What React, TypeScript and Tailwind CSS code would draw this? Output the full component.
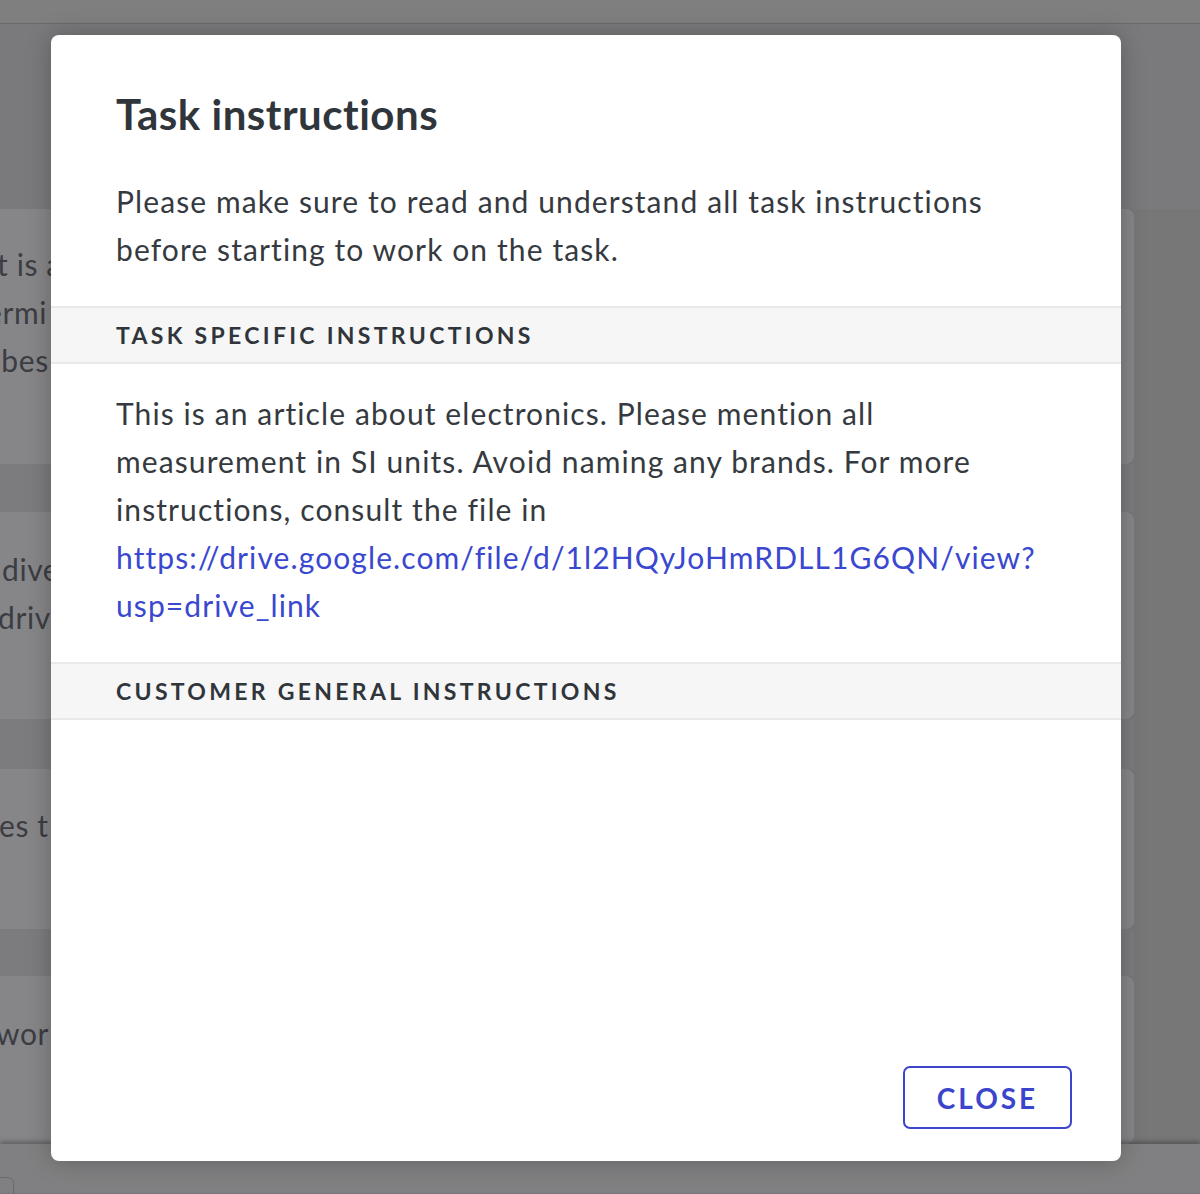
import React from "react";

const font = { fontFamily: "Lato, 'Noto Sans', sans-serif" };

function BehindCard({ lines, h, pt }: { lines: { t: string; ml: string }[]; h: string; pt: string }) {
  return (
    <div className={`w-[1134px] ${h} ${pt} bg-[#868689] rounded-r-[8px] text-[30px] leading-[48px] tracking-[0.6px] text-[#3b3d42]`}>
      {lines.map((l, i) => (
        <div key={i} className={`${l.ml} whitespace-nowrap`}>
          {l.t}
        </div>
      ))}
    </div>
  );
}

export default function App() {
  return (
    <div className="relative w-[1200px] h-[1194px] overflow-hidden bg-[#777777]" style={font}>
      {/* Page behind overlay */}
      <div className="flex flex-col">
        <div className="h-[24px] bg-[#7f7f7f] border-b border-[#6a6a6a]" />
        <div className="h-[185px] bg-[#7a7a7c]" />
        <BehindCard
          h="h-[255px]"
          pt="pt-[31px]"
          lines={[
            { t: "t is a", ml: "-ml-[3px]" },
            { t: "ermi", ml: "-ml-[14px]" },
            { t: "ubes", ml: "-ml-[16px]" },
          ]}
        />
        <div className="h-[48px] w-[1134px] bg-[#7c7c7e]" />
        <BehindCard
          h="h-[207px]"
          pt="pt-[33px]"
          lines={[
            { t: "dive", ml: "ml-[2px]" },
            { t: "driv", ml: "-ml-[2px]" },
          ]}
        />
        <div className="h-[50px] w-[1134px] bg-[#7c7c7e]" />
        <BehindCard h="h-[160px]" pt="pt-[32px]" lines={[{ t: "es t", ml: "-ml-[1px]" }]} />
        <div className="h-[47px] w-[1134px] bg-[#7c7c7e]" />
        <BehindCard h="h-[168px]" pt="pt-[33px]" lines={[{ t: "wor", ml: "-ml-[4px]" }]} />
        <div className="h-[49px] bg-[#808082] shadow-[0_-3px_4px_rgba(0,0,0,0.25)] pt-[33px]">
          <div className="w-[16px] h-[20px] border border-[#6a6a6a] rounded-tr-[6px] -ml-[2px]" />
        </div>
      </div>

      {/* Modal */}
      <div className="absolute left-[51px] top-[35px] w-[1070px] h-[1126px] bg-white rounded-[8px] shadow-[0_0_24px_rgba(0,0,0,0.25)] flex flex-col text-[#353a40]">
        <div className="pl-[65px] pr-[40px] pt-[55px]">
          <h1 className="text-[42px] leading-[48px] font-bold tracking-[0.5px] text-[#30353b]">Task instructions</h1>
          <p className="mt-[39px] text-[30px] leading-[48px] tracking-[1.1px] pb-[33px]">
            Please make sure to read and understand all task instructions
            <br />
            before starting to work on the task.
          </p>
        </div>
        <div className="h-[58px] bg-[#f6f6f6] border-y-2 border-[#e9e9e9] flex items-center px-[65px]">
          <span className="text-[23px] font-bold tracking-[3.3px] text-[#30353b]">TASK SPECIFIC INSTRUCTIONS</span>
        </div>
        <div className="pl-[65px] pr-[40px] pt-[25px] pb-[33px] text-[30px] leading-[48px] tracking-[1.1px]">
          This is an article about electronics. Please mention all
          <br />
          measurement in SI units. Avoid naming any brands. For more
          <br />
          instructions, consult the file in
          <br />
          <a className="text-[#3a47cf]" href="#">
            https://drive.google.com/file/d/1l2HQyJoHmRDLL1G6QN/view?
            <br />
            usp=drive_link
          </a>
        </div>
        <div className="h-[58px] bg-[#f6f6f6] border-y-2 border-[#e9e9e9] flex items-center px-[65px]">
          <span className="text-[23px] font-bold tracking-[3.3px] text-[#30353b]">CUSTOMER GENERAL INSTRUCTIONS</span>
        </div>
        <div className="mt-auto flex justify-end pr-[49px] pb-[32px]">
          <button className="w-[169px] h-[63px] border-2 border-[#3b45cc] rounded-[7px] text-[#3b45cc] text-[28px] font-bold tracking-[3px]">
            CLOSE
          </button>
        </div>
      </div>
    </div>
  );
}
